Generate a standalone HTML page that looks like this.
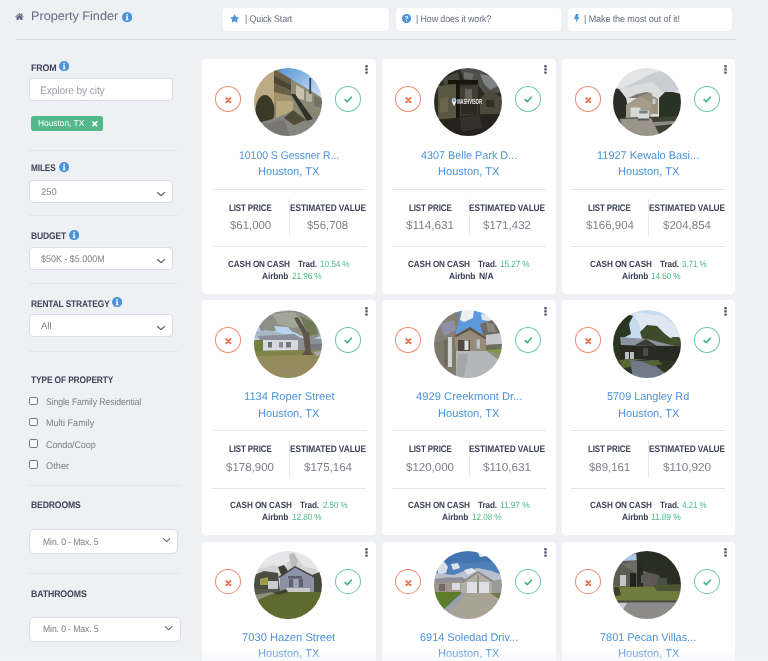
<!DOCTYPE html>
<html lang="en"><head><meta charset="utf-8"><title>Property Finder</title>
<style>
html,body{margin:0;padding:0}
body{width:768px;height:661px;overflow:hidden;background:#eef0f4;font-family:"Liberation Sans",sans-serif;position:relative;-webkit-font-smoothing:antialiased}
.a,.t{position:absolute;display:block}
.t{white-space:pre;transform-origin:0 50%;margin:0;font-weight:400;text-rendering:geometricPrecision}
header,aside,main{position:absolute;left:0;top:0}
.tab{position:absolute;top:8.1px;height:22.5px;background:#fff;border-radius:4px}
.hr{position:absolute;height:1px;background:#e2e5ea}
.inp{position:absolute;background:#fff;border:1px solid #d9dce2;box-sizing:border-box;border-radius:3.5px}
.cb{position:absolute;left:29.2px;width:8.4px;height:8.4px;box-sizing:border-box;border:1px solid #74777f;border-radius:1.8px;background:#f7f8fa}
.card{position:absolute;width:173.5px;height:234.5px;background:#fff;border-radius:4px}
.btn{position:absolute;width:26.2px;height:25.6px;box-sizing:border-box;border-radius:50%;border:1.1px solid}
.photo{position:absolute;left:51.6px;top:9.2px;width:68px;height:68px;border-radius:50%;overflow:hidden}
.dots{position:absolute;left:162.3px;top:6.4px;width:3px;height:9px}
.vd{position:absolute;left:86.5px;top:139.5px;width:1px;height:37.5px;background:#e6e8ed}
.fade{position:absolute;left:0;top:648px;width:768px;height:13px;background:linear-gradient(to bottom,rgba(243,244,247,0),rgba(243,244,247,.55))}
</style></head>
<body>
<svg width="0" height="0" style="position:absolute"><defs><linearGradient id="sky1" x1="0" y1="0" x2="1" y2="1"><stop offset="0" stop-color="#5a97da"/><stop offset="1" stop-color="#d3e2f3"/></linearGradient><filter id="soft" x="-5%" y="-5%" width="110%" height="110%"><feGaussianBlur stdDeviation="0.55"/></filter></defs></svg>
<header>
<svg class="a" style="left:15.2px;top:12.9px" width="9" height="7.4" viewBox="0 0 18 15"><path d="M9 0.2L0.3 7.6l1 1.2L9 2.4l7.7 6.4 1-1.2-3-2.5V1h-2.2v2.3z M9 3.7L3 8.7V15h4.4v-4.2h3.2V15H15V8.7z" fill="#5d6277"/></svg>
<h1 class="t" style="left:31.30px;top:9.00px;font-size:12.4px;line-height:14px;transform:scaleX(1.0210);color:#666b7e;">Property Finder</h1>
<svg class="a" style="left:122.05px;top:11.85px" width="10.3" height="10.3" viewBox="0 0 20 20"><circle cx="10" cy="10" r="10" fill="#4b93db"/><circle cx="10" cy="5.3" r="1.7" fill="#fff"/><path d="M7.6 8.2h3.9v6h1.1v1.8H7.4v-1.8h1.2v-4.2H7.6z" fill="#fff"/></svg>
<nav>
<a class="tab" style="left:223.3px;width:165.4px"><svg class="a" style="left:6.60px;top:5.80px" width="9.3" height="8.9" viewBox="0 0 20 19"><path d="M10 0l3.100 6.300 6.900 1-5 4.900 1.200 6.800L10 15.800 3.800 19 5 12.200 0 7.300l6.900-1z" fill="#4b93db"/></svg><span class="t" style="left:21.30px;top:5.90px;font-size:9.6px;line-height:11px;letter-spacing:-0.120px;transform:scaleX(0.9246);color:#666b7e;">| Quick Start</span></a>
<a class="tab" style="left:395.6px;width:165.3px"><svg class="a" style="left:6.10px;top:6.10px" width="9.1" height="9.1" viewBox="0 0 20 20"><circle cx="10" cy="10" r="10" fill="#4b93db"/><path d="M6.600 7.600c0-2 1.500-3.300 3.500-3.300 2.100 0 3.500 1.200 3.500 3 0 2.400-2.600 2.500-2.600 4.500h-2c0-2.800 2.500-3 2.500-4.500 0-.7-.6-1.200-1.400-1.200-.9 0-1.500.6-1.500 1.500z" fill="#fff"/><circle cx="10" cy="14.700" r="1.300" fill="#fff"/></svg><span class="t" style="left:20.10px;top:5.90px;font-size:9.6px;line-height:11px;letter-spacing:-0.120px;transform:scaleX(0.9253);color:#666b7e;">| How does it work?</span></a>
<a class="tab" style="left:567.9px;width:164.2px"><svg class="a" style="left:6.30px;top:6.10px" width="5.6" height="9.3" viewBox="0 0 12 20"><path d="M4.200 0h5.600L7.600 6.500H12L3.600 20l1.900-8.800H0z" fill="#4b93db"/></svg><span class="t" style="left:16.60px;top:5.90px;font-size:9.6px;line-height:11px;letter-spacing:-0.120px;transform:scaleX(0.9425);color:#666b7e;">| Make the most out of it!</span></a>
</nav>
<div class="hr" style="left:16px;top:39.2px;width:719.6px;background:#d4d7dd"></div>
</header>
<aside>
<label class="t" style="left:30.50px;top:63.00px;font-size:9.5px;line-height:11px;font-weight:700;letter-spacing:-0.120px;transform:scaleX(0.9313);color:#3d4257;">FROM</label>
<svg class="a" style="left:59.30px;top:61.30px" width="10.2" height="10.2" viewBox="0 0 20 20"><circle cx="10" cy="10" r="10" fill="#4b93db"/><circle cx="10" cy="5.3" r="1.7" fill="#fff"/><path d="M7.6 8.2h3.9v6h1.1v1.8H7.4v-1.8h1.2v-4.2H7.6z" fill="#fff"/></svg>
<div class="inp" style="left:29.3px;top:78.4px;width:143.7px;height:22.2px"><span class="t" style="left:9.70px;top:5.60px;font-size:10.8px;line-height:12px;letter-spacing:-0.120px;transform:scaleX(0.9442);color:#9a9ca3;">Explore by city</span></div>
<div class="a" style="left:31px;top:116px;width:72.2px;height:15.2px;background:#52b98b;border-radius:2.5px"><span class="t" style="left:6.50px;top:2.00px;font-size:8.7px;line-height:10px;transform:scaleX(0.9597);color:#ffffff;">Houston, TX</span><svg class="a" style="left:61.2px;top:5.1px" width="5.6" height="5.6" viewBox="0 0 10 10"><path d="M1.600 1.600l6.800 6.800M8.400 1.600l-6.800 6.800" stroke="#fff" stroke-width="2.900" stroke-linecap="round"/></svg></div>
<div class="hr" style="left:29.3px;top:150px;width:149px"></div>
<label class="t" style="left:30.50px;top:163.00px;font-size:9.5px;line-height:11px;font-weight:700;letter-spacing:-0.120px;transform:scaleX(0.8652);color:#3d4257;">MILES</label>
<svg class="a" style="left:58.90px;top:162.20px" width="10.2" height="10.2" viewBox="0 0 20 20"><circle cx="10" cy="10" r="10" fill="#4b93db"/><circle cx="10" cy="5.3" r="1.7" fill="#fff"/><path d="M7.6 8.2h3.9v6h1.1v1.8H7.4v-1.8h1.2v-4.2H7.6z" fill="#fff"/></svg>
<div class="inp" style="left:29.3px;top:180px;width:143.7px;height:22.6px;border-radius:4px"><span class="t" style="left:10.70px;top:6.00px;font-size:9.6px;line-height:11px;transform:scaleX(0.9740);color:#7d8087;">250</span><svg class="a" style="left:127.20px;top:10.60px" width="8" height="4.5" viewBox="0 0 16 9"><path d="M1 1l7 6.5L15 1" fill="none" stroke="#62656f" stroke-width="2.5" stroke-linecap="round" stroke-linejoin="round"/></svg></div>
<div class="hr" style="left:29.3px;top:215.2px;width:149px"></div>
<label class="t" style="left:30.50px;top:231.00px;font-size:9.5px;line-height:11px;font-weight:700;letter-spacing:-0.120px;transform:scaleX(0.8933);color:#3d4257;">BUDGET</label>
<svg class="a" style="left:68.90px;top:230.10px" width="10.2" height="10.2" viewBox="0 0 20 20"><circle cx="10" cy="10" r="10" fill="#4b93db"/><circle cx="10" cy="5.3" r="1.7" fill="#fff"/><path d="M7.6 8.2h3.9v6h1.1v1.8H7.4v-1.8h1.2v-4.2H7.6z" fill="#fff"/></svg>
<div class="inp" style="left:29.3px;top:247.3px;width:143.7px;height:22.4px;border-radius:4px"><span class="t" style="left:10.70px;top:5.70px;font-size:9.6px;line-height:11px;transform:scaleX(0.9314);color:#7d8087;">$50K - $5.000M</span><svg class="a" style="left:127.20px;top:10.50px" width="8" height="4.5" viewBox="0 0 16 9"><path d="M1 1l7 6.5L15 1" fill="none" stroke="#62656f" stroke-width="2.5" stroke-linecap="round" stroke-linejoin="round"/></svg></div>
<div class="hr" style="left:29.3px;top:282.8px;width:149px"></div>
<label class="t" style="left:30.50px;top:299.00px;font-size:9.5px;line-height:11px;font-weight:700;letter-spacing:-0.120px;transform:scaleX(0.8781);color:#3d4257;">RENTAL STRATEGY</label>
<svg class="a" style="left:111.90px;top:297.20px" width="10.2" height="10.2" viewBox="0 0 20 20"><circle cx="10" cy="10" r="10" fill="#4b93db"/><circle cx="10" cy="5.3" r="1.7" fill="#fff"/><path d="M7.6 8.2h3.9v6h1.1v1.8H7.4v-1.8h1.2v-4.2H7.6z" fill="#fff"/></svg>
<div class="inp" style="left:29.3px;top:314.4px;width:143.7px;height:22.6px;border-radius:4px"><span class="t" style="left:10.70px;top:5.60px;font-size:9.6px;line-height:11px;transform:scaleX(0.9933);color:#7d8087;">All</span><svg class="a" style="left:127.20px;top:10.60px" width="8" height="4.5" viewBox="0 0 16 9"><path d="M1 1l7 6.5L15 1" fill="none" stroke="#62656f" stroke-width="2.5" stroke-linecap="round" stroke-linejoin="round"/></svg></div>
<div class="hr" style="left:29.3px;top:351.2px;width:149px"></div>
<label class="t" style="left:30.50px;top:375.00px;font-size:9.5px;line-height:11px;font-weight:700;letter-spacing:-0.120px;transform:scaleX(0.8780);color:#3d4257;">TYPE OF PROPERTY</label>
<span class="cb" style="top:396.6px"></span>
<label class="t" style="left:45.50px;top:397.00px;font-size:9.6px;line-height:11px;letter-spacing:-0.120px;transform:scaleX(0.9091);color:#7d8087;">Single Family Residential</label>
<span class="cb" style="top:417.9px"></span>
<label class="t" style="left:45.50px;top:418.00px;font-size:9.6px;line-height:11px;transform:scaleX(0.9419);color:#7d8087;">Multi Family</label>
<span class="cb" style="top:439.4px"></span>
<label class="t" style="left:45.50px;top:440.00px;font-size:9.6px;line-height:11px;letter-spacing:-0.120px;transform:scaleX(0.9416);color:#7d8087;">Condo/Coop</label>
<span class="cb" style="top:460.2px"></span>
<label class="t" style="left:45.50px;top:461.00px;font-size:9.6px;line-height:11px;transform:scaleX(0.9667);color:#7d8087;">Other</label>
<div class="hr" style="left:29.2px;top:485.2px;width:152.3px"></div>
<label class="t" style="left:30.60px;top:500.00px;font-size:9.5px;line-height:11px;font-weight:700;letter-spacing:-0.120px;transform:scaleX(0.9019);color:#3d4257;">BEDROOMS</label>
<div class="inp" style="left:29.2px;top:529.3px;width:149px;height:24.8px;border-radius:5px"><span class="t" style="left:12.70px;top:6.70px;font-size:9.6px;line-height:11px;letter-spacing:-0.120px;transform:scaleX(0.8986);color:#7d8087;">Min. 0 - Max. 5</span><svg class="a" style="left:132.60px;top:7.70px" width="7.4" height="4.4" viewBox="0 0 16 9"><path d="M1 1l7 6.5L15 1" fill="none" stroke="#62656f" stroke-width="2.5" stroke-linecap="round" stroke-linejoin="round"/></svg></div>
<div class="hr" style="left:29.2px;top:573.4px;width:149.5px"></div>
<label class="t" style="left:30.60px;top:589.00px;font-size:9.5px;line-height:11px;font-weight:700;letter-spacing:-0.120px;transform:scaleX(0.9190);color:#3d4257;">BATHROOMS</label>
<div class="inp" style="left:29.2px;top:617.4px;width:151.8px;height:24.8px;border-radius:5px"><span class="t" style="left:12.70px;top:5.60px;font-size:9.6px;line-height:11px;letter-spacing:-0.120px;transform:scaleX(0.8986);color:#7d8087;">Min. 0 - Max. 5</span><svg class="a" style="left:135.00px;top:7.80px" width="7.4" height="4.4" viewBox="0 0 16 9"><path d="M1 1l7 6.5L15 1" fill="none" stroke="#62656f" stroke-width="2.5" stroke-linecap="round" stroke-linejoin="round"/></svg></div>
</aside>
<main>
<article class="card" style="left:202.3px;top:59.0px">
<svg class="dots" viewBox="0 0 3 9"><rect x="0.2" y="0" width="2.6" height="2.4" rx="0.7" fill="#585c6e"/><rect x="0.2" y="3.2" width="2.6" height="2.4" rx="0.7" fill="#585c6e"/><rect x="0.2" y="6.4" width="2.6" height="2.4" rx="0.7" fill="#585c6e"/></svg>
<div class="btn" style="left:13px;top:27px;border-color:#ec8a70"><svg class="a" style="left:8.8px;top:10px" width="6.8" height="6.4" viewBox="0 0 10 10"><path d="M1.700 1.700l6.600 6.600M8.300 1.700l-6.600 6.600" stroke="#e8724f" stroke-width="3.100" stroke-linecap="round"/></svg></div>
<div class="photo"><svg width="68" height="68" viewBox="0 0 68 68"><g filter="url(#soft)">
<rect width="68" height="68" fill="#8b866f"/>
<polygon points="26,0 68,0 68,30 60,25 50,19 38,12 26,4" fill="url(#sky1)"/>
<polygon points="0,0 20,0 20,52 0,56" fill="#bcaa85"/>
<polygon points="20,1 37,11 37,28 20,24" fill="#6b6146"/>
<polygon points="20,8 37,17 37,22 20,15" fill="#4a4535"/>
<polygon points="20,24 37,28 37,34 20,34" fill="#a0926c"/>
<polygon points="37,11 50,19 60,25 68,30 68,44 37,36" fill="#8d8975"/>
<polygon points="42,17 50,21 50,32 42,30" fill="#c9c3ae"/>
<polygon points="52,23 58,26 58,34 52,33" fill="#b9b5a3"/>
<polygon points="60,28 68,31 68,40 60,38" fill="#6f7160"/>
<ellipse cx="11" cy="43" rx="9.5" ry="16" fill="#3a3827"/>
<polygon points="22,33 39,33 39,43 22,51" fill="#b9a77d"/>
<polygon points="0,56 22,50 39,43 52,52 68,42 68,68 0,68" fill="#86857f"/>
<polygon points="39,42 52,52 40,57 30,50" fill="#4f4c35"/>
<polygon points="37,26 41,26 59,51 53,53" fill="#33332b"/>
<rect x="55.3" y="10" width="1.8" height="16" fill="#3d4352"/>
<polygon points="10,56 30,52 36,68 8,68" fill="#77766f"/>
</g></svg></div>
<div class="btn" style="left:132.5px;top:27px;border-color:#6cc9a0"><svg class="a" style="left:8.2px;top:9px" width="8.4" height="6.8" viewBox="0 0 12 10"><path d="M1.500 5.200l3.200 3L10.500 1.800" fill="none" stroke="#45b682" stroke-width="2.500" stroke-linecap="round" stroke-linejoin="round"/></svg></div>
<a class="t" style="left:36.70px;top:91.00px;font-size:11.2px;line-height:12px;transform:scaleX(0.9313);color:#4b93db;">10100 S Gessner R...</a>
<a class="t" style="left:56.10px;top:107.00px;font-size:11.2px;line-height:12px;transform:scaleX(0.9906);color:#4b93db;">Houston, TX</a>
<div class="hr" style="left:9.5px;top:130px;width:154px"></div>
<div class="vd"></div>
<span class="t" style="left:26.50px;top:144.00px;font-size:9.6px;line-height:11px;font-weight:700;letter-spacing:-0.120px;transform:scaleX(0.8259);color:#3d4257;">LIST PRICE</span>
<span class="t" style="left:87.40px;top:144.00px;font-size:9.6px;line-height:11px;font-weight:700;letter-spacing:-0.120px;transform:scaleX(0.8697);color:#3d4257;">ESTIMATED VALUE</span>
<span class="t" style="left:27.30px;top:160.00px;font-size:11.6px;line-height:13px;transform:scaleX(0.9828);color:#7d8087;">$61,000</span>
<span class="t" style="left:104.70px;top:160.00px;font-size:11.6px;line-height:13px;transform:scaleX(0.9828);color:#7d8087;">$56,708</span>
<div class="hr" style="left:9.5px;top:187.2px;width:154px"></div>
<span class="t" style="left:25.60px;top:200.00px;font-size:9.0px;line-height:10px;font-weight:700;letter-spacing:-0.120px;transform:scaleX(0.9078);color:#3d4257;">CASH ON CASH</span>
<span class="t" style="left:95.60px;top:200.00px;font-size:9.0px;line-height:10px;font-weight:700;letter-spacing:-0.120px;transform:scaleX(0.9084);color:#3d4257;">Trad.</span>
<span class="t" style="left:118.00px;top:200.00px;font-size:9.0px;line-height:10px;letter-spacing:-0.120px;transform:scaleX(0.9195);color:#4cbd8b;">10.54 %</span>
<span class="t" style="left:59.85px;top:212.00px;font-size:9.0px;line-height:10px;font-weight:700;letter-spacing:-0.120px;transform:scaleX(0.9300);color:#3d4257;">Airbnb</span>
<span class="t" style="left:89.55px;top:212.00px;font-size:9.0px;line-height:10px;letter-spacing:-0.120px;transform:scaleX(0.9195);color:#4cbd8b;">21.96 %</span>
</article>
<article class="card" style="left:382.0px;top:59.0px">
<svg class="dots" viewBox="0 0 3 9"><rect x="0.2" y="0" width="2.6" height="2.4" rx="0.7" fill="#585c6e"/><rect x="0.2" y="3.2" width="2.6" height="2.4" rx="0.7" fill="#585c6e"/><rect x="0.2" y="6.4" width="2.6" height="2.4" rx="0.7" fill="#585c6e"/></svg>
<div class="btn" style="left:13px;top:27px;border-color:#ec8a70"><svg class="a" style="left:8.8px;top:10px" width="6.8" height="6.4" viewBox="0 0 10 10"><path d="M1.700 1.700l6.600 6.600M8.300 1.700l-6.600 6.600" stroke="#e8724f" stroke-width="3.100" stroke-linecap="round"/></svg></div>
<div class="photo"><svg width="68" height="68" viewBox="0 0 68 68"><g filter="url(#soft)">
<rect width="68" height="68" fill="#2b2a24"/>
<polygon points="26,0 68,0 68,24 52,28 42,14 30,12" fill="#4f504b"/>
<polygon points="46,6 58,8 64,18 56,22 50,16" fill="#7d8184"/>
<polygon points="30,4 40,6 38,12 30,10" fill="#6c6e6c"/>
<polygon points="8,10 24,4 26,14 10,18" fill="#45443a"/>
<polygon points="4,18 22,16 22,50 4,52" fill="#58553f"/>
<polygon points="6,30 14,29 14,44 6,45" fill="#6a664c"/>
<rect x="14" y="12" width="30" height="4" fill="#14130e"/>
<rect x="22" y="12" width="3.5" height="50" fill="#16150f"/>
<polygon points="26,18 44,17 44,46 26,48" fill="#3f3d30"/>
<rect x="31" y="21" width="7" height="11" fill="#626258"/>
<rect x="27" y="34" width="16" height="12" fill="#2c2b23"/>
<polygon points="46,30 56,22 68,30 68,46 46,46" fill="#4d4a3a"/>
<rect x="52" y="32" width="8" height="7" fill="#2e2d25"/>
<polygon points="0,52 68,46 68,68 0,68" fill="#25241e"/>
<polygon points="26,50 46,47 48,60 28,64" fill="#33322a"/>
</g>
<path d="M20.100 30.200a2.300 2.300 0 0 1 2.300 2.300c0 1.800-2.300 5.600-2.300 5.600s-2.300-3.800-2.300-5.600a2.300 2.300 0 0 1 2.300-2.300z" fill="#e8eff7"/>
<circle cx="20.100" cy="32.500" r="1.300" fill="#4a90d9"/>
<text transform="translate(23.200 36.300) scale(0.550 1)" font-family="Liberation Sans, sans-serif" font-weight="700" font-size="7.400" fill="#f4f4f4" opacity="0.97" style="text-rendering:geometricPrecision">MASHVISOR</text>
</svg></div>
<div class="btn" style="left:132.5px;top:27px;border-color:#6cc9a0"><svg class="a" style="left:8.2px;top:9px" width="8.4" height="6.8" viewBox="0 0 12 10"><path d="M1.500 5.200l3.200 3L10.500 1.800" fill="none" stroke="#45b682" stroke-width="2.500" stroke-linecap="round" stroke-linejoin="round"/></svg></div>
<a class="t" style="left:38.70px;top:91.00px;font-size:11.2px;line-height:12px;transform:scaleX(0.9668);color:#4b93db;">4307 Belle Park D...</a>
<a class="t" style="left:56.10px;top:107.00px;font-size:11.2px;line-height:12px;transform:scaleX(0.9906);color:#4b93db;">Houston, TX</a>
<div class="hr" style="left:9.5px;top:130px;width:154px"></div>
<div class="vd"></div>
<span class="t" style="left:26.50px;top:144.00px;font-size:9.6px;line-height:11px;font-weight:700;letter-spacing:-0.120px;transform:scaleX(0.8259);color:#3d4257;">LIST PRICE</span>
<span class="t" style="left:87.40px;top:144.00px;font-size:9.6px;line-height:11px;font-weight:700;letter-spacing:-0.120px;transform:scaleX(0.8697);color:#3d4257;">ESTIMATED VALUE</span>
<span class="t" style="left:23.92px;top:160.00px;font-size:11.6px;line-height:13px;transform:scaleX(1.0095);color:#7d8087;">$114,631</span>
<span class="t" style="left:101.32px;top:160.00px;font-size:11.6px;line-height:13px;transform:scaleX(0.9915);color:#7d8087;">$171,432</span>
<div class="hr" style="left:9.5px;top:187.2px;width:154px"></div>
<span class="t" style="left:25.60px;top:200.00px;font-size:9.0px;line-height:10px;font-weight:700;letter-spacing:-0.120px;transform:scaleX(0.9078);color:#3d4257;">CASH ON CASH</span>
<span class="t" style="left:95.60px;top:200.00px;font-size:9.0px;line-height:10px;font-weight:700;letter-spacing:-0.120px;transform:scaleX(0.9084);color:#3d4257;">Trad.</span>
<span class="t" style="left:118.00px;top:200.00px;font-size:9.0px;line-height:10px;letter-spacing:-0.120px;transform:scaleX(0.9195);color:#4cbd8b;">15.27 %</span>
<span class="t" style="left:67.35px;top:212.00px;font-size:9.0px;line-height:10px;font-weight:700;letter-spacing:-0.120px;transform:scaleX(0.9300);color:#3d4257;">Airbnb</span>
<span class="t" style="left:97.05px;top:212.00px;font-size:9.0px;line-height:10px;font-weight:700;transform:scaleX(0.9419);color:#3d4257;">N/A</span>
</article>
<article class="card" style="left:561.8px;top:59.0px">
<svg class="dots" viewBox="0 0 3 9"><rect x="0.2" y="0" width="2.6" height="2.4" rx="0.7" fill="#585c6e"/><rect x="0.2" y="3.2" width="2.6" height="2.4" rx="0.7" fill="#585c6e"/><rect x="0.2" y="6.4" width="2.6" height="2.4" rx="0.7" fill="#585c6e"/></svg>
<div class="btn" style="left:13px;top:27px;border-color:#ec8a70"><svg class="a" style="left:8.8px;top:10px" width="6.8" height="6.4" viewBox="0 0 10 10"><path d="M1.700 1.700l6.600 6.600M8.300 1.700l-6.600 6.600" stroke="#e8724f" stroke-width="3.100" stroke-linecap="round"/></svg></div>
<div class="photo"><svg width="68" height="68" viewBox="0 0 68 68"><g filter="url(#soft)">
<rect width="68" height="68" fill="#dadcde"/>
<polygon points="0,12 68,0 68,8 0,22" fill="#cccdd1"/>
<polygon points="20,0 50,0 10,20 0,20" fill="#e3e4e6"/>
<polygon points="40,14 68,6 68,22 50,24" fill="#c9ccd2"/>
<polygon points="0,20 6,21 13,30 15,40 12,52 0,52" fill="#2b2d25"/>
<polygon points="46,30 52,24 60,24 68,26 68,50 46,50" fill="#2c3027"/>
<polygon points="15,30 24,26 34,24 40,26 30,30" fill="#7d786c"/>
<polygon points="13,37 27,28 38,36 38,49 13,49" fill="#a59d8a"/>
<polygon points="27,28 35,25 45,31 45,46 38,46 38,36" fill="#9a927f"/>
<rect x="17.5" y="39.5" width="10" height="9.5" fill="#d9d9d8"/>
<rect x="39.5" y="31" width="3" height="5" fill="#c9cdd2"/>
<polygon points="0,50 68,48 68,68 0,68" fill="#3b4230"/>
<polygon points="7,51 38,50 47,68 12,68" fill="#9b948a"/>
<polygon points="40,54 62,53 60,56 42,58" fill="#8f8c84"/>
<rect x="25" y="42" width="11" height="10" rx="1.5" fill="#d6d8da"/>
<rect x="26.3" y="42.5" width="8.4" height="3" fill="#7a7f85"/>
<rect x="25" y="50.5" width="11" height="2" fill="#55585a"/>
</g></svg></div>
<div class="btn" style="left:132.5px;top:27px;border-color:#6cc9a0"><svg class="a" style="left:8.2px;top:9px" width="8.4" height="6.8" viewBox="0 0 12 10"><path d="M1.500 5.200l3.200 3L10.500 1.800" fill="none" stroke="#45b682" stroke-width="2.500" stroke-linecap="round" stroke-linejoin="round"/></svg></div>
<a class="t" style="left:35.70px;top:91.00px;font-size:11.2px;line-height:12px;transform:scaleX(0.9800);color:#4b93db;">11927 Kewalo Basi...</a>
<a class="t" style="left:56.10px;top:107.00px;font-size:11.2px;line-height:12px;transform:scaleX(0.9906);color:#4b93db;">Houston, TX</a>
<div class="hr" style="left:9.5px;top:130px;width:154px"></div>
<div class="vd"></div>
<span class="t" style="left:26.50px;top:144.00px;font-size:9.6px;line-height:11px;font-weight:700;letter-spacing:-0.120px;transform:scaleX(0.8259);color:#3d4257;">LIST PRICE</span>
<span class="t" style="left:87.40px;top:144.00px;font-size:9.6px;line-height:11px;font-weight:700;letter-spacing:-0.120px;transform:scaleX(0.8697);color:#3d4257;">ESTIMATED VALUE</span>
<span class="t" style="left:23.92px;top:160.00px;font-size:11.6px;line-height:13px;transform:scaleX(0.9915);color:#7d8087;">$166,904</span>
<span class="t" style="left:101.32px;top:160.00px;font-size:11.6px;line-height:13px;transform:scaleX(0.9915);color:#7d8087;">$204,854</span>
<div class="hr" style="left:9.5px;top:187.2px;width:154px"></div>
<span class="t" style="left:28.10px;top:200.00px;font-size:9.0px;line-height:10px;font-weight:700;letter-spacing:-0.120px;transform:scaleX(0.9078);color:#3d4257;">CASH ON CASH</span>
<span class="t" style="left:98.10px;top:200.00px;font-size:9.0px;line-height:10px;font-weight:700;letter-spacing:-0.120px;transform:scaleX(0.9084);color:#3d4257;">Trad.</span>
<span class="t" style="left:120.50px;top:200.00px;font-size:9.0px;line-height:10px;letter-spacing:-0.120px;transform:scaleX(0.9007);color:#4cbd8b;">3.71 %</span>
<span class="t" style="left:59.85px;top:212.00px;font-size:9.0px;line-height:10px;font-weight:700;letter-spacing:-0.120px;transform:scaleX(0.9300);color:#3d4257;">Airbnb</span>
<span class="t" style="left:89.55px;top:212.00px;font-size:9.0px;line-height:10px;letter-spacing:-0.120px;transform:scaleX(0.9195);color:#4cbd8b;">14.60 %</span>
</article>
<article class="card" style="left:202.3px;top:300.4px">
<svg class="dots" viewBox="0 0 3 9"><rect x="0.2" y="0" width="2.6" height="2.4" rx="0.7" fill="#585c6e"/><rect x="0.2" y="3.2" width="2.6" height="2.4" rx="0.7" fill="#585c6e"/><rect x="0.2" y="6.4" width="2.6" height="2.4" rx="0.7" fill="#585c6e"/></svg>
<div class="btn" style="left:13px;top:27px;border-color:#ec8a70"><svg class="a" style="left:8.8px;top:10px" width="6.8" height="6.4" viewBox="0 0 10 10"><path d="M1.700 1.700l6.600 6.600M8.300 1.700l-6.600 6.600" stroke="#e8724f" stroke-width="3.100" stroke-linecap="round"/></svg></div>
<div class="photo"><svg width="68" height="68" viewBox="0 0 68 68"><g filter="url(#soft)">
<rect width="68" height="68" fill="#b7cfe8"/>
<polygon points="4,14 20,2 50,0 62,12 66,26 56,30 40,22 24,20 8,24" fill="#8e8f84"/>
<polygon points="18,4 40,2 52,14 40,18 24,14" fill="#a3a79a"/>
<polygon points="46,6 60,12 64,24 54,26" fill="#6f7c55"/>
<polygon points="20,16 34,17 40,24 24,24" fill="#b9d3ee"/>
<polygon points="0,22 12,20 30,24 0,28" fill="#a9b6c4"/>
<polygon points="4,26 40,24 50,30 6,31" fill="#8c8f9a"/>
<rect x="9" y="30" width="35" height="10.5" fill="#d7d9de"/>
<rect x="14" y="32" width="4" height="5.5" fill="#6e7078"/>
<rect x="25" y="32" width="4" height="5.5" fill="#8a8c93"/>
<rect x="32" y="32" width="5" height="5.5" fill="#74767d"/>
<polygon points="44,28 68,29 68,42 44,40" fill="#8d8f96"/>
<polygon points="56,34 68,34 68,42 56,41" fill="#777a7c"/>
<polygon points="0,30 9,30 9,42 0,42" fill="#707f40"/>
<polygon points="0,41 68,40 68,68 0,68" fill="#938b5c"/>
<polygon points="0,41 50,40 50,45 0,46" fill="#7f8347"/>
<polygon points="49,24 55,22 57,42 60,45 48,45 51,40" fill="#5e5648"/>
<polygon points="40,8 44,7 54,24 50,26" fill="#5a5548"/>
<polygon points="60,42 68,41 68,45 62,46" fill="#a5a8ae"/>
</g></svg></div>
<div class="btn" style="left:132.5px;top:27px;border-color:#6cc9a0"><svg class="a" style="left:8.2px;top:9px" width="8.4" height="6.8" viewBox="0 0 12 10"><path d="M1.500 5.200l3.200 3L10.500 1.800" fill="none" stroke="#45b682" stroke-width="2.500" stroke-linecap="round" stroke-linejoin="round"/></svg></div>
<a class="t" style="left:41.50px;top:90.60px;font-size:11.2px;line-height:12px;transform:scaleX(1.0001);color:#4b93db;">1134 Roper Street</a>
<a class="t" style="left:56.10px;top:107.60px;font-size:11.2px;line-height:12px;transform:scaleX(0.9906);color:#4b93db;">Houston, TX</a>
<div class="hr" style="left:9.5px;top:130px;width:154px"></div>
<div class="vd"></div>
<span class="t" style="left:26.50px;top:143.60px;font-size:9.6px;line-height:11px;font-weight:700;letter-spacing:-0.120px;transform:scaleX(0.8259);color:#3d4257;">LIST PRICE</span>
<span class="t" style="left:87.40px;top:143.60px;font-size:9.6px;line-height:11px;font-weight:700;letter-spacing:-0.120px;transform:scaleX(0.8697);color:#3d4257;">ESTIMATED VALUE</span>
<span class="t" style="left:23.92px;top:160.60px;font-size:11.6px;line-height:13px;transform:scaleX(0.9915);color:#7d8087;">$178,900</span>
<span class="t" style="left:101.32px;top:160.60px;font-size:11.6px;line-height:13px;transform:scaleX(0.9915);color:#7d8087;">$175,164</span>
<div class="hr" style="left:9.5px;top:187.2px;width:154px"></div>
<span class="t" style="left:28.10px;top:199.60px;font-size:9.0px;line-height:10px;font-weight:700;letter-spacing:-0.120px;transform:scaleX(0.9078);color:#3d4257;">CASH ON CASH</span>
<span class="t" style="left:98.10px;top:199.60px;font-size:9.0px;line-height:10px;font-weight:700;letter-spacing:-0.120px;transform:scaleX(0.9084);color:#3d4257;">Trad.</span>
<span class="t" style="left:120.50px;top:199.60px;font-size:9.0px;line-height:10px;letter-spacing:-0.120px;transform:scaleX(0.9007);color:#4cbd8b;">2.50 %</span>
<span class="t" style="left:59.85px;top:211.60px;font-size:9.0px;line-height:10px;font-weight:700;letter-spacing:-0.120px;transform:scaleX(0.9300);color:#3d4257;">Airbnb</span>
<span class="t" style="left:89.55px;top:211.60px;font-size:9.0px;line-height:10px;letter-spacing:-0.120px;transform:scaleX(0.9195);color:#4cbd8b;">12.80 %</span>
</article>
<article class="card" style="left:382.0px;top:300.4px">
<svg class="dots" viewBox="0 0 3 9"><rect x="0.2" y="0" width="2.6" height="2.4" rx="0.7" fill="#585c6e"/><rect x="0.2" y="3.2" width="2.6" height="2.4" rx="0.7" fill="#585c6e"/><rect x="0.2" y="6.4" width="2.6" height="2.4" rx="0.7" fill="#585c6e"/></svg>
<div class="btn" style="left:13px;top:27px;border-color:#ec8a70"><svg class="a" style="left:8.8px;top:10px" width="6.8" height="6.4" viewBox="0 0 10 10"><path d="M1.700 1.700l6.600 6.600M8.300 1.700l-6.600 6.600" stroke="#e8724f" stroke-width="3.100" stroke-linecap="round"/></svg></div>
<div class="photo"><svg width="68" height="68" viewBox="0 0 68 68"><g filter="url(#soft)">
<rect width="68" height="68" fill="#7e786b"/>
<polygon points="22,0 60,0 60,24 22,24" fill="#5a9add"/>
<polygon points="28,0 40,0 39,8 30,12 26,10" fill="#eceef2"/>
<polygon points="47,4 58,6 60,12 48,10" fill="#e4e7ec"/>
<polygon points="0,8 26,2 24,16 20,26 0,34" fill="#857f76"/>
<polygon points="6,14 20,10 22,20 10,26" fill="#8f90a8"/>
<polygon points="46,14 58,10 68,20 68,26 50,28" fill="#6e6c62"/>
<polygon points="52,12 60,14 62,22 54,22" fill="#8d8b80"/>
<polygon points="20,25 36,17 53,27 53,41 22,41" fill="#978b79"/>
<polygon points="20,26 36,17 53,28 51,29 36,20 22,27" fill="#5c554a"/>
<rect x="24" y="30" width="12" height="11" fill="#4f4a42"/>
<rect x="30.5" y="30.5" width="4" height="9.5" fill="#dcdfe3"/>
<rect x="42.5" y="29.5" width="3.5" height="9" fill="#b9c1d0"/>
<polygon points="52,25 68,23 68,34 52,35" fill="#c4c7cc"/>
<polygon points="52,35 68,34 68,40 52,40" fill="#6b6e5c"/>
<polygon points="52,40 68,39 68,44 56,44" fill="#7f9a44"/>
<polygon points="0,36 22,38 22,68 0,68" fill="#7f796b"/>
<rect x="14" y="27" width="4" height="30" fill="#cfd0d0"/>
<rect x="10" y="30" width="3" height="26" fill="#6d675b"/>
<polygon points="22,41 53,41 68,52 68,68 22,68" fill="#b4b6ba"/>
<polygon points="53,41 68,44 68,52" fill="#8a8f7e"/>
<polygon points="24,44 34,44 30,68 22,68" fill="#a5a6a6"/>
</g></svg></div>
<div class="btn" style="left:132.5px;top:27px;border-color:#6cc9a0"><svg class="a" style="left:8.2px;top:9px" width="8.4" height="6.8" viewBox="0 0 12 10"><path d="M1.500 5.200l3.200 3L10.500 1.800" fill="none" stroke="#45b682" stroke-width="2.500" stroke-linecap="round" stroke-linejoin="round"/></svg></div>
<a class="t" style="left:33.50px;top:90.60px;font-size:11.2px;line-height:12px;transform:scaleX(1.0024);color:#4b93db;">4929 Creekmont Dr...</a>
<a class="t" style="left:56.10px;top:107.60px;font-size:11.2px;line-height:12px;transform:scaleX(0.9906);color:#4b93db;">Houston, TX</a>
<div class="hr" style="left:9.5px;top:130px;width:154px"></div>
<div class="vd"></div>
<span class="t" style="left:26.50px;top:143.60px;font-size:9.6px;line-height:11px;font-weight:700;letter-spacing:-0.120px;transform:scaleX(0.8259);color:#3d4257;">LIST PRICE</span>
<span class="t" style="left:87.40px;top:143.60px;font-size:9.6px;line-height:11px;font-weight:700;letter-spacing:-0.120px;transform:scaleX(0.8697);color:#3d4257;">ESTIMATED VALUE</span>
<span class="t" style="left:23.92px;top:160.60px;font-size:11.6px;line-height:13px;transform:scaleX(0.9915);color:#7d8087;">$120,000</span>
<span class="t" style="left:101.32px;top:160.60px;font-size:11.6px;line-height:13px;transform:scaleX(1.0095);color:#7d8087;">$110,631</span>
<div class="hr" style="left:9.5px;top:187.2px;width:154px"></div>
<span class="t" style="left:25.60px;top:199.60px;font-size:9.0px;line-height:10px;font-weight:700;letter-spacing:-0.120px;transform:scaleX(0.9078);color:#3d4257;">CASH ON CASH</span>
<span class="t" style="left:95.60px;top:199.60px;font-size:9.0px;line-height:10px;font-weight:700;letter-spacing:-0.120px;transform:scaleX(0.9084);color:#3d4257;">Trad.</span>
<span class="t" style="left:118.00px;top:199.60px;font-size:9.0px;line-height:10px;letter-spacing:-0.120px;transform:scaleX(0.9391);color:#4cbd8b;">11.97 %</span>
<span class="t" style="left:59.85px;top:211.60px;font-size:9.0px;line-height:10px;font-weight:700;letter-spacing:-0.120px;transform:scaleX(0.9300);color:#3d4257;">Airbnb</span>
<span class="t" style="left:89.55px;top:211.60px;font-size:9.0px;line-height:10px;letter-spacing:-0.120px;transform:scaleX(0.9195);color:#4cbd8b;">12.08 %</span>
</article>
<article class="card" style="left:561.8px;top:300.4px">
<svg class="dots" viewBox="0 0 3 9"><rect x="0.2" y="0" width="2.6" height="2.4" rx="0.7" fill="#585c6e"/><rect x="0.2" y="3.2" width="2.6" height="2.4" rx="0.7" fill="#585c6e"/><rect x="0.2" y="6.4" width="2.6" height="2.4" rx="0.7" fill="#585c6e"/></svg>
<div class="btn" style="left:13px;top:27px;border-color:#ec8a70"><svg class="a" style="left:8.8px;top:10px" width="6.8" height="6.4" viewBox="0 0 10 10"><path d="M1.700 1.700l6.600 6.600M8.300 1.700l-6.600 6.600" stroke="#e8724f" stroke-width="3.100" stroke-linecap="round"/></svg></div>
<div class="photo"><svg width="68" height="68" viewBox="0 0 68 68"><g filter="url(#soft)">
<rect width="68" height="68" fill="#c5dbef"/>
<polygon points="20,2 50,6 68,20 68,30 30,24" fill="#dfe8f1"/>
<polygon points="0,8 14,4 20,6 16,14 18,24 10,28 12,50 0,56" fill="#2c3423"/>
<polygon points="27,22 34,15 44,16 52,24 60,30 63,37 30,31" fill="#3d4b29"/>
<polygon points="54,30 60,27 66,27 68,30 68,40 58,38" fill="#46512f"/>
<polygon points="7,27 34,29 62,36 8,35" fill="#8b939e"/>
<polygon points="22,35 33,29 44,36" fill="#3a3a34"/>
<polygon points="7,35 63,36 63,51 7,49" fill="#2a2a24"/>
<polygon points="46,38 68,36 68,56 46,52" fill="#262a20"/>
<rect x="12" y="42" width="4" height="7" fill="#b9bdc5"/>
<rect x="17" y="42" width="4" height="7" fill="#b9bdc5"/>
<rect x="30" y="38" width="5" height="8" fill="#4a4b45"/>
<polygon points="0,49 30,50 63,51 68,52 68,68 0,68" fill="#2f3624"/>
<polygon points="6,50 22,49 24,56 10,58" fill="#5b6b30"/>
<polygon points="17,50 38,52 58,68 20,68" fill="#717888"/>
<polygon points="30,52 44,50 50,54 40,56" fill="#566231"/>
</g></svg></div>
<div class="btn" style="left:132.5px;top:27px;border-color:#6cc9a0"><svg class="a" style="left:8.2px;top:9px" width="8.4" height="6.8" viewBox="0 0 12 10"><path d="M1.500 5.200l3.200 3L10.500 1.800" fill="none" stroke="#45b682" stroke-width="2.500" stroke-linecap="round" stroke-linejoin="round"/></svg></div>
<a class="t" style="left:45.70px;top:90.60px;font-size:11.2px;line-height:12px;transform:scaleX(0.9715);color:#4b93db;">5709 Langley Rd</a>
<a class="t" style="left:56.10px;top:107.60px;font-size:11.2px;line-height:12px;transform:scaleX(0.9906);color:#4b93db;">Houston, TX</a>
<div class="hr" style="left:9.5px;top:130px;width:154px"></div>
<div class="vd"></div>
<span class="t" style="left:26.50px;top:143.60px;font-size:9.6px;line-height:11px;font-weight:700;letter-spacing:-0.120px;transform:scaleX(0.8259);color:#3d4257;">LIST PRICE</span>
<span class="t" style="left:87.40px;top:143.60px;font-size:9.6px;line-height:11px;font-weight:700;letter-spacing:-0.120px;transform:scaleX(0.8697);color:#3d4257;">ESTIMATED VALUE</span>
<span class="t" style="left:27.30px;top:160.60px;font-size:11.6px;line-height:13px;transform:scaleX(0.9828);color:#7d8087;">$89,161</span>
<span class="t" style="left:101.32px;top:160.60px;font-size:11.6px;line-height:13px;transform:scaleX(1.0095);color:#7d8087;">$110,920</span>
<div class="hr" style="left:9.5px;top:187.2px;width:154px"></div>
<span class="t" style="left:28.10px;top:199.60px;font-size:9.0px;line-height:10px;font-weight:700;letter-spacing:-0.120px;transform:scaleX(0.9078);color:#3d4257;">CASH ON CASH</span>
<span class="t" style="left:98.10px;top:199.60px;font-size:9.0px;line-height:10px;font-weight:700;letter-spacing:-0.120px;transform:scaleX(0.9084);color:#3d4257;">Trad.</span>
<span class="t" style="left:120.50px;top:199.60px;font-size:9.0px;line-height:10px;letter-spacing:-0.120px;transform:scaleX(0.9007);color:#4cbd8b;">4.21 %</span>
<span class="t" style="left:59.85px;top:211.60px;font-size:9.0px;line-height:10px;font-weight:700;letter-spacing:-0.120px;transform:scaleX(0.9300);color:#3d4257;">Airbnb</span>
<span class="t" style="left:89.55px;top:211.60px;font-size:9.0px;line-height:10px;letter-spacing:-0.120px;transform:scaleX(0.9391);color:#4cbd8b;">11.89 %</span>
</article>
<article class="card" style="left:202.3px;top:541.8px">
<svg class="dots" viewBox="0 0 3 9"><rect x="0.2" y="0" width="2.6" height="2.4" rx="0.7" fill="#585c6e"/><rect x="0.2" y="3.2" width="2.6" height="2.4" rx="0.7" fill="#585c6e"/><rect x="0.2" y="6.4" width="2.6" height="2.4" rx="0.7" fill="#585c6e"/></svg>
<div class="btn" style="left:13px;top:27px;border-color:#ec8a70"><svg class="a" style="left:8.8px;top:10px" width="6.8" height="6.4" viewBox="0 0 10 10"><path d="M1.700 1.700l6.600 6.600M8.300 1.700l-6.600 6.600" stroke="#e8724f" stroke-width="3.100" stroke-linecap="round"/></svg></div>
<div class="photo"><svg width="68" height="68" viewBox="0 0 68 68"><g filter="url(#soft)">
<rect width="68" height="68" fill="#e6e6e8"/>
<polygon points="4,18 20,14 30,18 34,10 44,8 50,16 62,18 66,30 2,32" fill="#d2d2d2"/>
<polygon points="35,3 40,2 44,9 42,16 37,16" fill="#bdbcb8"/>
<polygon points="0,24 10,20 24,22 26,40 0,42" fill="#4b4e42"/>
<polygon points="24,16 30,14 34,20 28,26" fill="#3c4036"/>
<polygon points="6,28 14,26 14,34 6,34" fill="#a09a4e"/>
<polygon points="14,30 24,30 24,38 14,38" fill="#c9ccd0"/>
<polygon points="58,24 68,20 68,42 58,42" fill="#454a3a"/>
<polygon points="24,26 41,15 62,26 60,27 41,17 26,27" fill="#45464a"/>
<polygon points="26,27 41,17 60,27 60,41 26,41" fill="#8c91a8"/>
<rect x="34" y="25" width="14" height="2.5" fill="#5b5f70"/>
<rect x="35" y="28" width="4" height="8" fill="#5f6274"/>
<rect x="45" y="28" width="4" height="8" fill="#5f6274"/>
<rect x="40" y="28" width="4" height="9" fill="#a1a4b4"/>
<rect x="32" y="37" width="24" height="4" fill="#c9c9c8"/>
<polygon points="0,38 26,38 26,42 0,48" fill="#55584b"/>
<polygon points="0,44 18,41 22,44 4,52" fill="#8f8c80"/>
<path d="M0,52 Q14,42 30,41 L68,41 L68,68 L0,68 Z" fill="#5e6b2f"/>
<polygon points="20,42 32,38 34,41 24,44" fill="#3f4333"/>
</g></svg></div>
<div class="btn" style="left:132.5px;top:27px;border-color:#6cc9a0"><svg class="a" style="left:8.2px;top:9px" width="8.4" height="6.8" viewBox="0 0 12 10"><path d="M1.500 5.200l3.200 3L10.500 1.800" fill="none" stroke="#45b682" stroke-width="2.500" stroke-linecap="round" stroke-linejoin="round"/></svg></div>
<a class="t" style="left:40.20px;top:90.20px;font-size:11.2px;line-height:12px;transform:scaleX(0.9990);color:#4b93db;">7030 Hazen Street</a>
<a class="t" style="left:56.10px;top:106.20px;font-size:11.2px;line-height:12px;transform:scaleX(0.9906);color:#4b93db;">Houston, TX</a>
<div class="hr" style="left:9.5px;top:130px;width:154px"></div>
</article>
<article class="card" style="left:382.0px;top:541.8px">
<svg class="dots" viewBox="0 0 3 9"><rect x="0.2" y="0" width="2.6" height="2.4" rx="0.7" fill="#585c6e"/><rect x="0.2" y="3.2" width="2.6" height="2.4" rx="0.7" fill="#585c6e"/><rect x="0.2" y="6.4" width="2.6" height="2.4" rx="0.7" fill="#585c6e"/></svg>
<div class="btn" style="left:13px;top:27px;border-color:#ec8a70"><svg class="a" style="left:8.8px;top:10px" width="6.8" height="6.4" viewBox="0 0 10 10"><path d="M1.700 1.700l6.600 6.600M8.300 1.700l-6.600 6.600" stroke="#e8724f" stroke-width="3.100" stroke-linecap="round"/></svg></div>
<div class="photo"><svg width="68" height="68" viewBox="0 0 68 68"><g filter="url(#soft)">
<rect width="68" height="68" fill="#4f80ba"/>
<polygon points="0,0 68,0 68,10 0,14" fill="#4274b2"/>
<polygon points="44,2 52,1 54,5 46,6" fill="#e3e6ec"/>
<polygon points="4,14 10,10 14,16 12,22 4,24" fill="#d9dde5"/>
<polygon points="17,13 24,12 26,17 19,19" fill="#dde1e8"/>
<polygon points="0,22 20,24 30,20 44,17 58,20 68,24 68,34 0,34" fill="#b9c0cf"/>
<polygon points="30,19 38,17 42,20 34,24" fill="#e4e7ec"/>
<polygon points="0,28 16,26 30,30 30,41 0,41" fill="#9e968a"/>
<polygon points="0,28 28,26 33,30 0,32" fill="#8e8f9e"/>
<rect x="18" y="32" width="8" height="7" fill="#d8dade"/>
<rect x="5" y="33" width="6" height="7" fill="#6f6a5e"/>
<polygon points="27,31 44,20 60,30 60,42 27,42" fill="#b1ada7"/>
<polygon points="27,31 44,20 60,30 58,31 44,22 29,32" fill="#8b8880"/>
<rect x="33" y="31" width="10" height="11" fill="#dde0e5"/>
<rect x="45" y="31" width="10" height="11" fill="#dde0e5"/>
<rect x="43.3" y="24" width="1.4" height="20" fill="#8a7f6e"/>
<polygon points="58,30 68,28 68,42 58,42" fill="#9a9a98"/>
<polygon points="0,41 28,41 8,60 0,56" fill="#5d7b2c"/>
<polygon points="28,42 62,42 68,48 68,68 20,68 10,60" fill="#a9a395"/>
<polygon points="28,42 32,42 16,62 10,58" fill="#9aa0aa"/>
<polygon points="56,42 68,42 68,50" fill="#6f7a4a"/>
</g></svg></div>
<div class="btn" style="left:132.5px;top:27px;border-color:#6cc9a0"><svg class="a" style="left:8.2px;top:9px" width="8.4" height="6.8" viewBox="0 0 12 10"><path d="M1.500 5.200l3.200 3L10.500 1.800" fill="none" stroke="#45b682" stroke-width="2.500" stroke-linecap="round" stroke-linejoin="round"/></svg></div>
<a class="t" style="left:37.70px;top:90.20px;font-size:11.2px;line-height:12px;transform:scaleX(0.9767);color:#4b93db;">6914 Soledad Driv...</a>
<a class="t" style="left:56.10px;top:106.20px;font-size:11.2px;line-height:12px;transform:scaleX(0.9906);color:#4b93db;">Houston, TX</a>
<div class="hr" style="left:9.5px;top:130px;width:154px"></div>
</article>
<article class="card" style="left:561.8px;top:541.8px">
<svg class="dots" viewBox="0 0 3 9"><rect x="0.2" y="0" width="2.6" height="2.4" rx="0.7" fill="#585c6e"/><rect x="0.2" y="3.2" width="2.6" height="2.4" rx="0.7" fill="#585c6e"/><rect x="0.2" y="6.4" width="2.6" height="2.4" rx="0.7" fill="#585c6e"/></svg>
<div class="btn" style="left:13px;top:27px;border-color:#ec8a70"><svg class="a" style="left:8.8px;top:10px" width="6.8" height="6.4" viewBox="0 0 10 10"><path d="M1.700 1.700l6.600 6.600M8.300 1.700l-6.600 6.600" stroke="#e8724f" stroke-width="3.100" stroke-linecap="round"/></svg></div>
<div class="photo"><svg width="68" height="68" viewBox="0 0 68 68"><g filter="url(#soft)">
<rect width="68" height="68" fill="#2b2f23"/>
<polygon points="6,8 24,2 24,12 8,14" fill="#a9c9ea"/>
<polygon points="0,14 10,10 26,9 40,20 60,26 68,28 68,38 0,38" fill="#5b5951"/>
<polygon points="8,13 26,9 40,21 22,22" fill="#6e6c66"/>
<polygon points="23,0 60,2 68,20 68,36 50,36 46,24 30,20 24,12" fill="#2a2e22"/>
<polygon points="24,12 30,12 30,36 24,36" fill="#262a20"/>
<polygon points="0,16 8,13 22,22 22,36 0,36" fill="#5d5b52"/>
<rect x="7" y="24" width="6" height="11" fill="#c3c7cb"/>
<rect x="17" y="22" width="6" height="14" fill="#23241e"/>
<rect x="28" y="24" width="8" height="8" fill="#5a5d58"/>
<rect x="44" y="27" width="10" height="7" fill="#4c4f49"/>
<polygon points="0,34 10,36 68,35 68,50 0,50" fill="#6f7b3c"/>
<polygon points="40,34 68,33 68,40 44,40" fill="#4b5530"/>
<polygon points="0,36 6,36 8,44 0,46" fill="#3a3f2c"/>
<rect x="0" y="49.5" width="68" height="1.8" fill="#4a4a44"/>
<rect x="0" y="51.3" width="68" height="17" fill="#8d8b87"/>
<polygon points="0,52 14,52 8,62 0,62" fill="#c9cdd2"/>
</g></svg></div>
<div class="btn" style="left:132.5px;top:27px;border-color:#6cc9a0"><svg class="a" style="left:8.2px;top:9px" width="8.4" height="6.8" viewBox="0 0 12 10"><path d="M1.500 5.200l3.200 3L10.500 1.800" fill="none" stroke="#45b682" stroke-width="2.500" stroke-linecap="round" stroke-linejoin="round"/></svg></div>
<a class="t" style="left:38.70px;top:90.20px;font-size:11.2px;line-height:12px;transform:scaleX(0.9748);color:#4b93db;">7801 Pecan Villas...</a>
<a class="t" style="left:56.10px;top:106.20px;font-size:11.2px;line-height:12px;transform:scaleX(0.9906);color:#4b93db;">Houston, TX</a>
<div class="hr" style="left:9.5px;top:130px;width:154px"></div>
</article>
</main>
<div class="fade"></div>
</body></html>
